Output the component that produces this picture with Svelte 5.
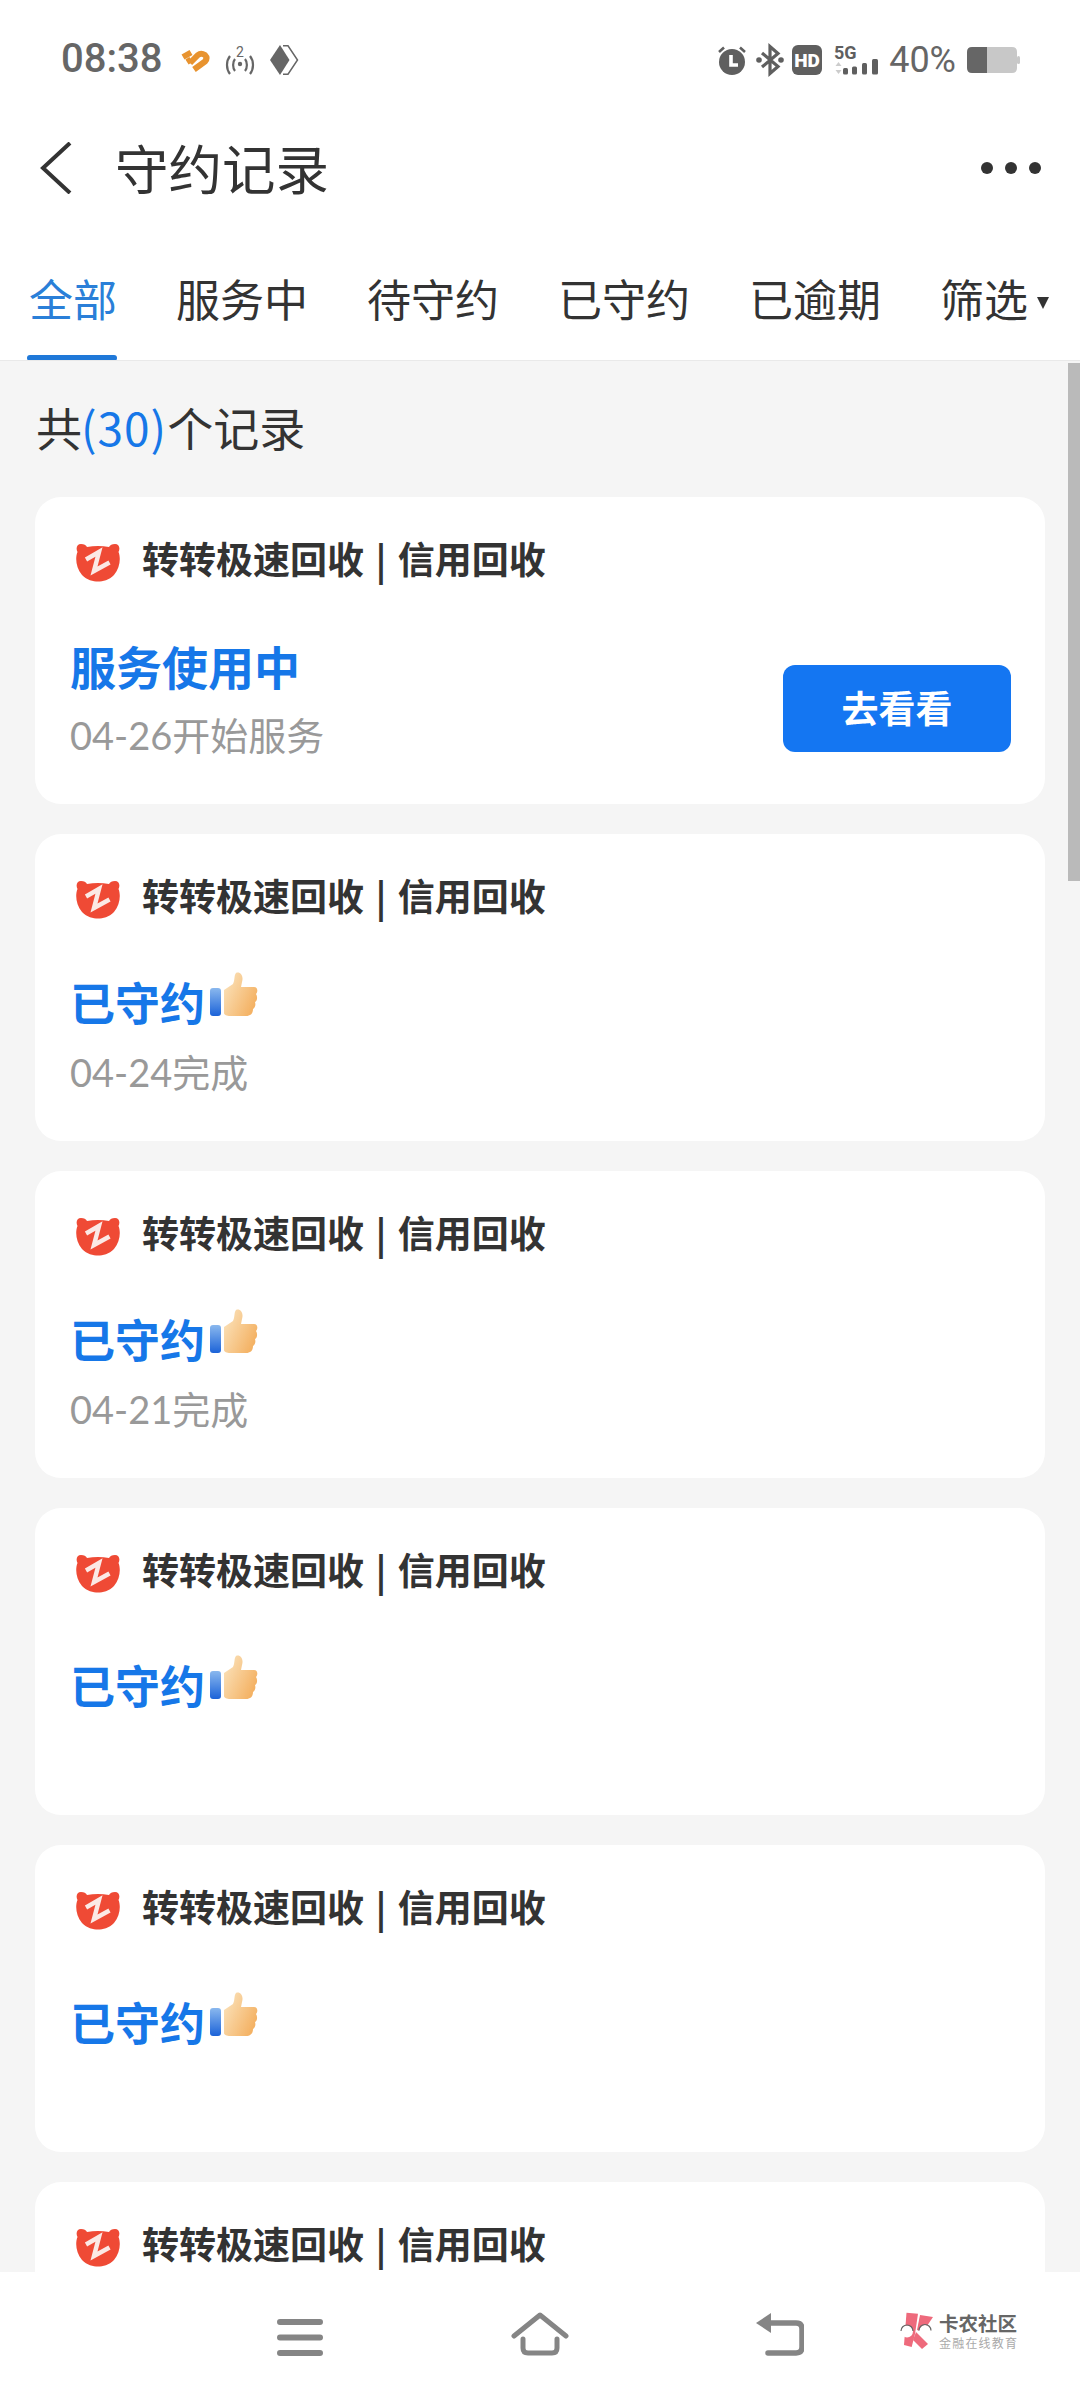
<script>
  const tabs = ['全部', '服务中', '待守约', '已守约', '已逾期'];

  // date: second line of a card, active: the one still running
  const records = [
    { status: '服务使用中', date: '04-26开始服务', active: true },
    { status: '已守约', date: '04-24完成' },
    { status: '已守约', date: '04-21完成' },
    { status: '已守约', date: '' },
    { status: '已守约', date: '' },
    { status: '已守约', date: '' }
  ];
</script>

<div class="page">
  <div class="status">
    <span class="time">08:38</span>
    <svg class="s-heart" viewBox="0 0 29 23" width="29" height="23">
      <path d="M2 8 L10 3.500 M6 13 L10 10.500" stroke="#e8932f" stroke-width="6" fill="none" />
      <path d="M9 14 L17 6 Q20 3.500 24 6 Q27 9 24 12.500 L13 20.500" stroke="#e8932f" stroke-width="6" fill="none" />
    </svg>
    <svg class="s-nfc" viewBox="0 0 30 27" width="30" height="27">
      <path d="M5 9 C1 14 1 22 5 27 M25 9 C29 14 29 22 25 27 M10 12 C7.500 15 7.500 21 10 24 M20 12 C22.500 15 22.500 21 20 24" stroke="#666" stroke-width="2.200" fill="none" />
      <circle cx="15" cy="17" r="2.200" fill="#666" />
      <text x="15" y="10" class="s-nfc-num">2</text>
    </svg>
    <svg class="s-diamond" viewBox="0 0 29 30" width="29" height="30">
      <path d="M10 0 L19.500 15 L10 30 L0 15 Z" fill="#666" />
      <path d="M13 0.800 H18 L27.500 15 L18 29.200 H13" stroke="#666" stroke-width="1.500" fill="none" />
    </svg>
    <div class="status-right">
      <svg viewBox="0 0 30 30" width="30" height="30">
        <circle cx="15" cy="17" r="13" fill="#5f5f5f" />
        <path d="M2 7 L7 2.500 M28 7 L23 2.500" stroke="#5f5f5f" stroke-width="2.600" />
        <path d="M14 10 V20 H21" stroke="#fff" stroke-width="3.600" fill="none" />
      </svg>
      <svg class="s-bt" viewBox="0 0 28 30" width="28" height="30">
        <path d="M6 8 L22 21.500 L14 28.500 V1.500 L22 8.500 L6 22" stroke="#5f5f5f" stroke-width="3.200" fill="none" />
        <circle cx="3" cy="15" r="2.800" fill="#5f5f5f" />
        <circle cx="25" cy="15" r="2.800" fill="#5f5f5f" />
      </svg>
      <svg class="s-hd" viewBox="0 0 30 30" width="30" height="30">
        <rect width="30" height="30" rx="6" fill="#5f5f5f" />
        <text x="15" y="21.500" class="s-hd-txt">HD</text>
      </svg>
      <svg class="s-net" viewBox="0 0 44 30" width="44" height="30">
        <text x="0" y="14" class="s-5g">5G</text>
        <path d="M4.500 17 L1.500 21 H7.500 Z" fill="#ccc" />
        <path d="M4.500 29 L1.500 25 H7.500 Z" fill="#ccc" />
        <rect x="9" y="23" width="5" height="6.500" rx="1.500" fill="#5f5f5f" />
        <rect x="18" y="21.500" width="5" height="8" rx="1.500" fill="#5f5f5f" />
        <rect x="28" y="18" width="5" height="11.500" rx="1.500" fill="#5f5f5f" />
        <rect x="38" y="14" width="6" height="15.500" rx="1.500" fill="#5f5f5f" />
      </svg>
      <span class="pct">40%</span>
      <svg class="s-bat" viewBox="0 0 53 26" width="53" height="26">
        <path d="M20 0 H45 Q50 0 50 5 V21 Q50 26 45 26 H20 Z" fill="#c8c8c8" />
        <path d="M20 0 H5 Q0 0 0 5 V21 Q0 26 5 26 H20 Z" fill="#666" />
        <rect x="50" y="9" width="3" height="8" rx="1.500" fill="#c8c8c8" />
      </svg>
    </div>
  </div>

  <header class="topbar">
    <svg class="back" viewBox="0 0 32 52" width="32" height="52">
      <path d="M30 1 L3 26 L30 51" stroke="#333" stroke-width="4" fill="none" />
    </svg>
    <h1>守约记录</h1>
    <div class="more"><i></i><i></i><i></i></div>
  </header>

  <nav class="tabs">
    {#each tabs as tab, i}
      <span class="tab" class:on={i === 0}>{tab}</span>
    {/each}
    <span class="tab filter">筛选<b class="caret"></b></span>
  </nav>

  <main class="content">
    <div class="scrollbar"></div>
    <div class="count">共<em>(30)</em>个记录</div>
    <div class="list">
      {#each records as r}
        <section class="card">
          <div class="head">
            <svg class="bear" viewBox="0 0 45 38" width="45" height="38">
              <path d="M5 0 C8 0 10 1 11 3 C18 1.500 26 1.500 33 3 C34 1 36 0 39 0 C43 0 44.500 4 42.500 8 C45 14 44 24 38 31 C33 36 27 37.500 22 37.500 C17 37.500 11 36 6 31 C0 24 -1 14 1.500 8 C-0.500 4 1 0 5 0 Z" fill="#ef4a35" />
              <path d="M10 15.500 L23 8 L18 27 L33.500 18.500" stroke="#fbe9e5" stroke-width="4.500" fill="none" />
            </svg>
            <span class="title">转转极速回收 | 信用回收</span>
          </div>
          <div class="body">
            <div class="info" class:nodate={!r.date}>
              <div class="state" class:active={r.active}>
                {r.status}
                {#if !r.active}
                  <svg class="thumb" viewBox="0 0 48 46" width="48" height="46">
                    <defs>
                      <linearGradient id="cuff" x1="0" y1="0" x2="0" y2="1">
                        <stop offset="0" stop-color="#8ab8ee" />
                        <stop offset="1" stop-color="#1c63d8" />
                      </linearGradient>
                      <linearGradient id="hand" x1="0" y1="0" x2="1" y2="0.600">
                        <stop offset="0" stop-color="#fbe6c2" />
                        <stop offset="1" stop-color="#f4b264" />
                      </linearGradient>
                    </defs>
                    <rect x="0" y="16" width="11" height="28" rx="3" fill="url(#cuff)" />
                    <path d="M14 18 L23 12 C25 8 24 3 26 1 C30 -1 34 4 32 10 L31 15 H44 C48 15 48 20 46 22 C48 25 47 29 45 30 C46 33 45 36 43 37 C43 42 40 44 36 44 H20 C17 44 14 43 14 41 Z" fill="url(#hand)" />
                  </svg>
                {/if}
              </div>
              {#if r.date}<div class="date">{r.date}</div>{/if}
            </div>
            {#if r.active}<button class="go">去看看</button>{/if}
          </div>
        </section>
      {/each}
    </div>
  </main>

  <footer class="navbar">
    <svg class="n-menu" viewBox="0 0 46 37" width="46" height="37">
      <path d="M3 3 H43 M3 18.500 H43 M3 34 H43" stroke="#858585" stroke-width="6" stroke-linecap="round" />
    </svg>
    <svg class="n-home" viewBox="0 0 58 44" width="58" height="44">
      <path d="M3 24 L29 3 L55 24" stroke="#858585" stroke-width="5" stroke-linecap="round" stroke-linejoin="round" fill="none" />
      <path d="M12 27 V36 Q12 41 17 41 H41 Q46 41 46 36 V27" stroke="#858585" stroke-width="5" stroke-linecap="round" fill="none" />
    </svg>
    <svg class="n-back" viewBox="0 0 48 43" width="48" height="43">
      <path d="M10 10 H40 Q46 10 46 16 V34 Q46 40 40 40 H12" stroke="#858585" stroke-width="5.500" stroke-linecap="round" fill="none" />
      <path d="M0 10 L15 0 V20 Z" fill="#858585" />
    </svg>
    <div class="brand">
      <svg viewBox="0 0 34 38" width="34" height="38">
        <path d="M6.500 0.700 L18 1.700 L15 22 L11.700 35 L4 33 Z" fill="#ee6a7c" />
        <path d="M20 3 L33 5 L23 20 L17 18 Z" fill="#ee6a7c" />
        <path d="M16 20 L28 32 L22 37 L13 28 Z" fill="#ee6a7c" />
        <circle cx="7" cy="19.500" r="6" fill="#fff" />
        <circle cx="25" cy="19" r="6" fill="#fff" />
        <path d="M1 19 A6 6 0 0 1 13 19 M19 18.500 A6 6 0 0 1 31 18.500" stroke="#666" stroke-width="1.200" fill="none" />
      </svg>
      <div class="brand-text">
        <strong>卡农社区</strong>
        <small>金融在线教育</small>
      </div>
    </div>
  </footer>
</div>

<style>
  :global(body) {
    margin: 0;
    background: #fff;
  }

  .page {
    width: 1080px;
    height: 2400px;
    display: flex;
    flex-direction: column;
    overflow: hidden;
    background: #fff;
    font-family: "Noto Sans CJK SC", "Noto Sans", sans-serif;
    color: #333;
  }

  .status {
    height: 120px;
    flex: none;
    display: flex;
    align-items: center;
    padding: 0 60px 0 61px;
    box-sizing: border-box;
  }
  .status svg {
    overflow: visible;
  }
  .time {
    font-family: Roboto, sans-serif;
    font-size: 40px;
    font-weight: 500;
    color: #666;
    width: 120px;
    margin-bottom: 4px;
  }
  .s-nfc { margin-left: 15px; }
  .s-nfc-num {
    font-family: Roboto, sans-serif;
    font-size: 14px;
    fill: #666;
    text-anchor: middle;
  }
  .s-diamond { margin-left: 15px; }
  .status-right {
    margin-left: auto;
    display: flex;
    align-items: center;
  }
  .s-bt { margin-left: 9px; }
  .s-hd { margin-left: 8px; }
  .s-hd-txt {
    font-family: Roboto, sans-serif;
    font-size: 19px;
    font-weight: 900;
    fill: #fff;
    text-anchor: middle;
  }
  .s-net { margin-left: 12px; }
  .s-5g {
    font-family: Roboto, sans-serif;
    font-size: 18px;
    font-weight: 700;
    fill: #5f5f5f;
  }
  .pct {
    font-family: Roboto, sans-serif;
    font-size: 36px;
    color: #666;
    margin-left: 11px;
  }
  .s-bat { margin-left: 11px; }

  .topbar {
    height: 92px;
    flex: none;
    display: flex;
    align-items: center;
    padding: 4px 39px 0 40px;
    box-sizing: border-box;
  }
  .topbar h1 {
    margin: 0 0 4px 43px;
    font-size: 53.500px;
    font-weight: 400;
    color: #333;
  }
  .more {
    margin-left: auto;
    display: flex;
    gap: 12px;
  }
  .more i {
    width: 12px;
    height: 12px;
    border-radius: 50%;
    background: #333;
  }

  .tabs {
    height: 149px;
    flex: none;
    display: flex;
    gap: 59px;
    padding: 56px 0 0 29px;
    box-sizing: border-box;
    background: #fff;
  }
  .tab {
    position: relative;
    font-size: 44px;
    line-height: 60px;
    height: 60px;
    color: #333;
    white-space: nowrap;
  }
  .tab.on {
    color: #2a7fd8;
  }
  .tab.on::after {
    content: "";
    position: absolute;
    left: -2px;
    right: 0;
    top: 87px;
    height: 6px;
    border-radius: 3px;
    background: #1f78d8;
  }
  .caret {
    display: inline-block;
    margin-left: 9px;
    vertical-align: 8px;
    border-left: 6.500px solid transparent;
    border-right: 6.500px solid transparent;
    border-top: 12px solid #333;
  }

  .content {
    position: relative;
    flex: 1;
    min-height: 0;
    overflow: hidden;
    background: #f5f5f5;
    border-top: 1px solid #e9e9e9;
    margin-top: -1px;
  }
  .scrollbar {
    position: absolute;
    right: 0;
    top: 2px;
    width: 12px;
    height: 518px;
    background: #bababa;
  }
  .count {
    height: 136px;
    display: flex;
    align-items: center;
    padding: 0 0 7px 36px;
    box-sizing: border-box;
    font-size: 46px;
    color: #333;
  }
  .count em {
    font-style: normal;
    letter-spacing: 1px;
    margin-left: -1px;
    color: #1677e8;
  }

  .list {
    display: flex;
    flex-direction: column;
    gap: 30px;
    padding: 0 35px;
  }
  .card {
    height: 307px;
    flex: none;
    box-sizing: border-box;
    padding: 38px 34px 0 35px;
    background: #fff;
    border-radius: 26px;
  }
  .head {
    height: 50px;
    display: flex;
    align-items: center;
    padding-left: 6px;
  }
  .bear {
    margin-top: 5px;
  }
  .title {
    margin: 0 0 5px 21px;
    font-size: 37px;
    font-weight: 700;
    word-spacing: 3px;
    color: #333;
    white-space: nowrap;
  }
  .body {
    display: flex;
    justify-content: space-between;
    align-items: flex-start;
    margin-top: 50px;
  }
  .info.nodate {
    padding-top: 9px;
  }
  .state {
    display: flex;
    align-items: flex-end;
    height: 60px;
    line-height: 60px;
    font-size: 45px;
    font-weight: 700;
    color: #1677e8;
    white-space: nowrap;
  }
  .state.active {
    font-size: 46px;
  }
  .thumb {
    margin: 0 0 14px 5px;
    filter: blur(0.6px);
  }
  .date {
    margin-top: 17px;
    font-family: Lato, "Noto Sans CJK SC", sans-serif;
    font-size: 38px;
    line-height: 46px;
    color: #999;
  }
  .go {
    width: 228px;
    height: 87px;
    margin-top: 30px;
    padding-bottom: 4px;
    border: 0;
    border-radius: 12px;
    background: #1476f2;
    color: #fff;
    font-family: inherit;
    font-size: 37px;
    font-weight: 700;
  }

  .navbar {
    position: relative;
    height: 128px;
    flex: none;
    background: #fff;
    display: flex;
    align-items: flex-start;
    padding: 40px 0 0 277px;
    box-sizing: border-box;
  }
  .n-menu { margin-top: 7px; }
  .n-home { margin: 0 0 0 188px; }
  .n-back { margin: 1px 0 0 187px; }
  .brand {
    display: flex;
    margin-left: 96px;
    gap: 5px;
  }
  .brand-text {
    display: flex;
    flex-direction: column;
    width: 80px;
  }
  .brand strong {
    font-size: 19.500px;
    line-height: 22px;
    font-weight: 700;
    color: #666;
    white-space: nowrap;
  }
  .brand small {
    font-size: 12px;
    line-height: 18px;
    letter-spacing: 1.200px;
    color: #aaa;
    white-space: nowrap;
  }
</style>
